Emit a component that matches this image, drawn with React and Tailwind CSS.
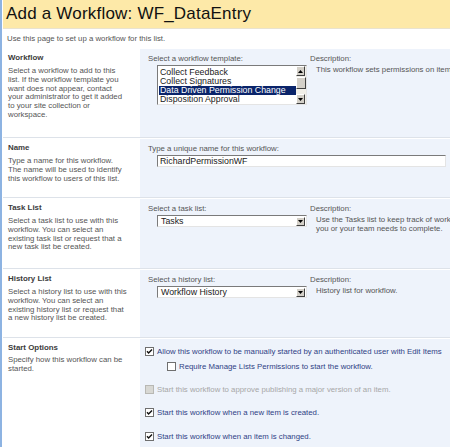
import React from "react";

const font = { fontFamily: '"Liberation Sans", Arial, sans-serif' };

function Check({ checked, disabled }) {
  return (
    <svg width="9" height="9" viewBox="0 0 9 9" className="shrink-0">
      <rect
        x="0.5"
        y="0.5"
        width="8"
        height="8"
        fill={disabled ? "#d8d8d4" : "#ffffff"}
        stroke={disabled ? "#b8b8b4" : "#6f6f6f"}
      />
      {checked && (
        <path d="M2 4.2 L3.6 6 L7 2.4" fill="none" stroke="#111" strokeWidth="1.4" />
      )}
    </svg>
  );
}

function Arrow({ up, tall }) {
  return (
    <div
      className={`w-[9px] ${tall ? "h-[10px]" : "h-[9px]"} bg-[#d4d0c8] border border-t-white border-l-white border-b-[#404040] border-r-[#404040] flex items-center justify-center`}
    >
      <svg width="5" height="3" viewBox="0 0 5 3">
        <path d={up ? "M0 3 L2.5 0 L5 3 Z" : "M0 0 L5 0 L2.5 3 Z"} fill="#000" />
      </svg>
    </div>
  );
}

function Select({ value }) {
  return (
    <div className="w-[150px] h-[12px] bg-white border border-t-[#7a7a7a] border-l-[#7a7a7a] border-b-[#e4e4e4] border-r-[#e4e4e4] flex items-center pl-[3px] pr-[1px]">
      <span className="flex-1 text-[8.8px] text-[#1a1a1a] leading-none">{value}</span>
      <Arrow />
    </div>
  );
}

function Section({ title, lines, height, children }) {
  return (
    <>
      <div className="flex" style={{ height }}>
        <div className="w-[137px] pt-[4px] pl-[5px] pr-[2px] overflow-hidden">
          <div className="text-[7.9px] leading-[9px] font-bold text-[#3c3c3c]">{title}</div>
          <div className="mt-[5px] text-[7.8px] leading-[8.8px] text-[#555]">
            {lines.map((l, i) => (
              <div key={i} className="whitespace-nowrap">{l}</div>
            ))}
          </div>
        </div>
        <div className="flex-1 bg-[#eef3fb] pt-[5px] pl-[8px] overflow-hidden">{children}</div>
      </div>
      <div className="h-[1px] bg-[#dde2e9]" />
      <div className="h-[1px] bg-white" />
    </>
  );
}

function Desc({ children }) {
  return (
    <div className="text-[7.8px] leading-[9px] text-[#555] whitespace-nowrap">
      <div>Description:</div>
      <div className="pl-[6px] mt-[2px]">{children}</div>
    </div>
  );
}

function Option({ checked, disabled, indent, text, mt }) {
  return (
    <div className={`flex items-center gap-[3px] ${indent ? "pl-[27px]" : "pl-[5px]"} ${mt}`}>
      <Check checked={checked} disabled={disabled} />
      <span
        className={`text-[7.8px] leading-[9px] whitespace-nowrap ${
          disabled ? "text-[#a7a7a7]" : "text-[#2f4285]"
        }`}
      >
        {text}
      </span>
    </div>
  );
}

export default function App() {
  const templates = [
    "Collect Feedback",
    "Collect Signatures",
    "Data Driven Permission Change",
    "Disposition Approval",
  ];

  return (
    <div className="flex w-[450px] h-[447px] overflow-hidden bg-white" style={font}>
      <div className="w-[2px] bg-[#8db3e2] shrink-0" />
      <div className="flex-1 pl-[1px] flex flex-col min-w-0">
        <div className="h-[28px] bg-[#fde9a8] flex items-center pl-[3px]">
          <span className="text-[17px] text-[#111] tracking-[0.2px]">Add a Workflow: WF_DataEntry</span>
        </div>
        <div className="h-[1px] bg-[#e9e3cf]" />
        <div className="h-[20px] flex items-center pl-[4px] text-[7.8px] text-[#555]">
          Use this page to set up a workflow for this list.
        </div>

        <Section
          title="Workflow"
          height={88}
          lines={[
            "Select a workflow to add to this",
            "list. If the workflow template you",
            "want does not appear, contact",
            "your administrator to get it added",
            "to your site collection or",
            "workspace.",
          ]}
        >
          <div className="flex">
            <div className="w-[162px] shrink-0">
              <div className="text-[7.8px] leading-[9px] text-[#555]">Select a workflow template:</div>
              <div className="mt-[2px] ml-[9px] w-[150px] h-[40px] bg-white border border-t-[#7a7a7a] border-l-[#7a7a7a] border-b-[#e4e4e4] border-r-[#e4e4e4] flex overflow-hidden">
                <div className="flex-1 pl-[1px] pt-[2px] min-w-0">
                  {templates.map((t, i) => (
                    <div
                      key={t}
                      className={`h-[9px] pl-[1px] text-[8.8px] leading-[9px] whitespace-nowrap ${
                        i === 2 ? "bg-[#0a246a] text-white" : "text-[#1a1a1a]"
                      }`}
                    >
                      {t}
                    </div>
                  ))}
                </div>
                <div className="w-[10px] flex flex-col bg-[#f1efe8]">
                  <Arrow up tall />
                  <div className="flex-1 py-[1px]">
                    <div className="h-[12px] bg-[#d4d0c8] border border-t-white border-l-white border-b-[#404040] border-r-[#404040]" />
                  </div>
                  <Arrow tall />
                </div>
              </div>
            </div>
            <Desc>This workflow sets permissions on items</Desc>
          </div>
        </Section>

        <Section
          title="Name"
          height={58}
          lines={[
            "Type a name for this workflow.",
            "The name will be used to identify",
            "this workflow to users of this list.",
          ]}
        >
          <div className="text-[7.8px] leading-[9px] text-[#555]">Type a unique name for this workflow:</div>
          <div className="mt-[2px] ml-[9px] w-[289px] h-[12px] bg-white border border-t-[#7a7a7a] border-l-[#7a7a7a] border-b-[#e4e4e4] border-r-[#e4e4e4] flex items-center pl-[2px]">
            <span className="text-[8.8px] text-[#1a1a1a] leading-none">RichardPermissionWF</span>
          </div>
        </Section>

        <Section
          title="Task List"
          height={69}
          lines={[
            "Select a task list to use with this",
            "workflow. You can select an",
            "existing task list or request that a",
            "new task list be created.",
          ]}
        >
          <div className="flex">
            <div className="w-[162px] shrink-0">
              <div className="text-[7.8px] leading-[9px] text-[#555]">Select a task list:</div>
              <div className="mt-[2px] ml-[9px]">
                <Select value="Tasks" />
              </div>
            </div>
            <Desc>
              <div>Use the Tasks list to keep track of work</div>
              <div>you or your team needs to complete.</div>
            </Desc>
          </div>
        </Section>

        <Section
          title="History List"
          height={67}
          lines={[
            "Select a history list to use with this",
            "workflow. You can select an",
            "existing history list or request that",
            "a new history list be created.",
          ]}
        >
          <div className="flex">
            <div className="w-[162px] shrink-0">
              <div className="text-[7.8px] leading-[9px] text-[#555]">Select a history list:</div>
              <div className="mt-[2px] ml-[9px]">
                <Select value="Workflow History" />
              </div>
            </div>
            <Desc>History list for workflow.</Desc>
          </div>
        </Section>

        <div className="flex flex-1">
          <div className="w-[137px] pt-[4px] pl-[5px] pr-[2px]">
            <div className="text-[7.9px] leading-[9px] font-bold text-[#3c3c3c]">Start Options</div>
            <div className="mt-[4px] text-[7.8px] leading-[8.8px] text-[#555]">
              <div>Specify how this workflow can be</div>
              <div>started.</div>
            </div>
          </div>
          <div className="flex-1 bg-[#eef3fb] pt-[8px] overflow-hidden">
            <Option checked text="Allow this workflow to be manually started by an authenticated user with Edit Items" />
            <Option indent text="Require Manage Lists Permissions to start the workflow." mt="mt-[6px]" />
            <Option disabled text="Start this workflow to approve publishing a major version of an item." mt="mt-[14px]" />
            <Option checked text="Start this workflow when a new item is created." mt="mt-[14px]" />
            <Option checked text="Start this workflow when an item is changed." mt="mt-[15px]" />
          </div>
        </div>
      </div>
    </div>
  );
}
